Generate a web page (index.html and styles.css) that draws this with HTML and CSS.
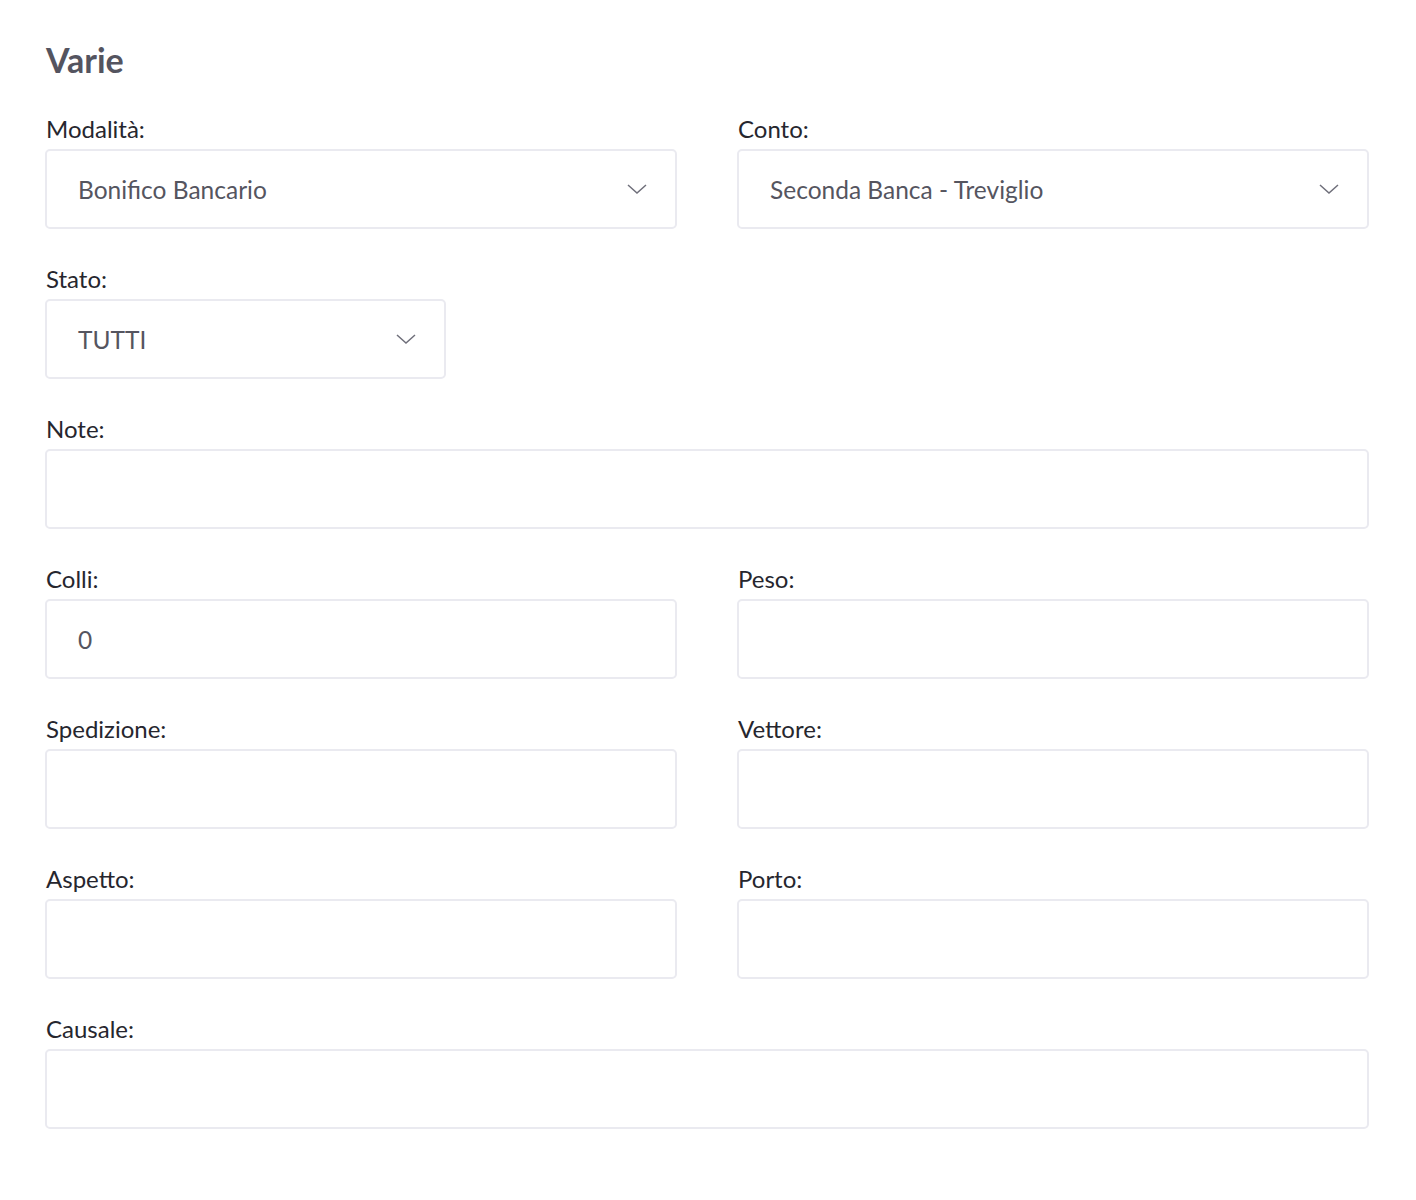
FILE: index.html
```html
<!DOCTYPE html>
<html lang="it">
<head>
<meta charset="utf-8">
<title>Varie</title>
<link rel="stylesheet" href="styles.css">
</head>
<body>
<main class="panel">
  <h2 class="title">Varie</h2>
  <div class="grid">
    <div class="field">
      <label class="label">Modalità:</label>
      <div class="control select"><span class="value">Bonifico Bancario</span>
        <svg class="chev" viewBox="0 0 20 10" width="20" height="10"><path d="M1 1 L10 9 L19 1" fill="none" stroke="#6f6f7a" stroke-width="1.5"/></svg>
      </div>
    </div>
    <div class="field">
      <label class="label">Conto:</label>
      <div class="control select"><span class="value">Seconda Banca - Treviglio</span>
        <svg class="chev" viewBox="0 0 20 10" width="20" height="10"><path d="M1 1 L10 9 L19 1" fill="none" stroke="#6f6f7a" stroke-width="1.5"/></svg>
      </div>
    </div>
    <div class="field full">
      <label class="label">Stato:</label>
      <div class="control select narrow"><span class="value">TUTTI</span>
        <svg class="chev" viewBox="0 0 20 10" width="20" height="10"><path d="M1 1 L10 9 L19 1" fill="none" stroke="#6f6f7a" stroke-width="1.5"/></svg>
      </div>
    </div>
    <div class="field full">
      <label class="label">Note:</label>
      <div class="control"></div>
    </div>
    <div class="field">
      <label class="label">Colli:</label>
      <div class="control"><span class="value">0</span></div>
    </div>
    <div class="field">
      <label class="label">Peso:</label>
      <div class="control"></div>
    </div>
    <div class="field">
      <label class="label">Spedizione:</label>
      <div class="control"></div>
    </div>
    <div class="field">
      <label class="label">Vettore:</label>
      <div class="control"></div>
    </div>
    <div class="field">
      <label class="label">Aspetto:</label>
      <div class="control"></div>
    </div>
    <div class="field">
      <label class="label">Porto:</label>
      <div class="control"></div>
    </div>
    <div class="field full">
      <label class="label">Causale:</label>
      <div class="control"></div>
    </div>
  </div>
</main>
</body>
</html>
```

FILE: styles.css
```css
html, body {
  margin: 0;
  padding: 0;
  background: #ffffff;
}
body {
  font-family: "Lato", "Liberation Sans", sans-serif;
}
.panel {
  width: 1325px;
  padding: 40px 46px 60px 45px;
}
.title {
  margin: 0 0 35px 1px;
  font-size: 34px;
  line-height: 40px;
  font-weight: 700;
  color: #54545f;
}
.grid {
  display: grid;
  grid-template-columns: 632px 632px;
  column-gap: 60px;
  row-gap: 36px;
}
.field {
  display: flex;
  flex-direction: column;
}
.field.full {
  grid-column: 1 / span 2;
}
.label {
  font-size: 24px;
  line-height: 28px;
  color: #26262e;
  margin: 0 0 6px 1px;
}
.control {
  box-sizing: border-box;
  height: 80px;
  border: 2px solid #eaeaf0;
  border-radius: 5px;
  display: flex;
  align-items: center;
  padding: 0 28px 0 31px;
  background: #fff;
}
.control.narrow {
  width: 401px;
}
.select {
  justify-content: space-between;
}
.value {
  font-size: 24.5px;
  color: #55555f;
}
.chev {
  display: block;
}
```
